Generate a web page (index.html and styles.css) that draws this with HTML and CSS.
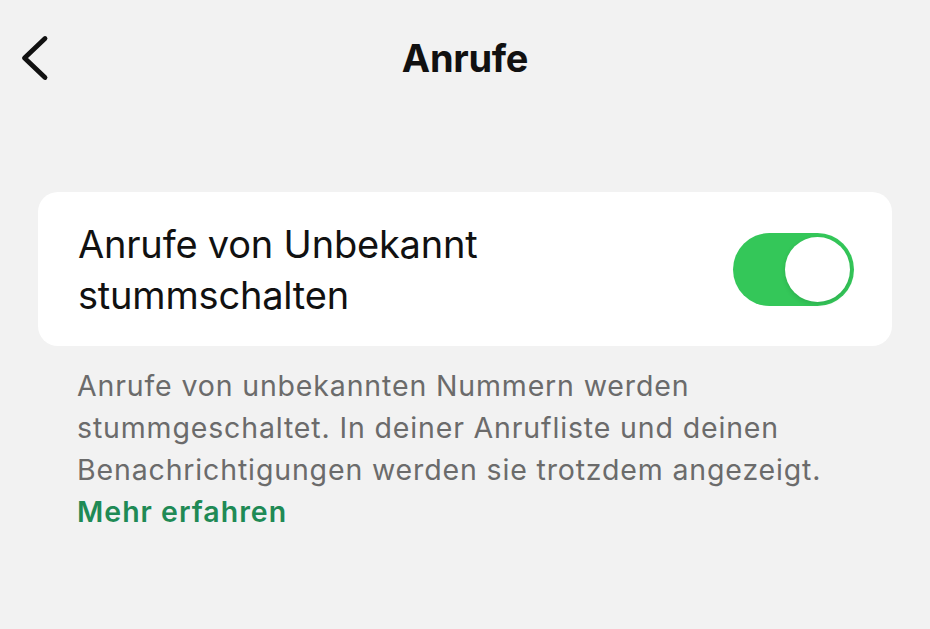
FILE: index.html
```html
<!DOCTYPE html>
<html lang="de">
<head>
  <meta charset="UTF-8">
  <meta name="viewport" content="width=device-width, initial-scale=1.0">
  <title>Anrufe</title>
  <link rel="stylesheet" href="styles.css">
</head>
<body>
  <div class="screen">
    <div class="nav-bar">
      <div class="back-btn">
        <svg width="30" height="46" viewBox="0 0 30 46">
          <path d="M26 3.5 L5.5 23 L26 42.5" fill="none" stroke="#111" stroke-width="4.8" stroke-linecap="round" stroke-linejoin="round"/>
        </svg>
      </div>
      <div class="nav-title">Anrufe</div>
      <div class="nav-spacer"></div>
    </div>

    <div class="settings-card">
      <div class="setting-label">Anrufe von Unbekannt<br>stummschalten</div>
      <div class="toggle on">
        <div class="knob"></div>
      </div>
    </div>

    <div class="setting-footer">
      Anrufe von unbekannten Nummern werden stummgeschaltet. In deiner Anrufliste und deinen Benachrichtigungen werden sie trotzdem angezeigt.
      <a class="learn-more" href="#">Mehr erfahren</a>
    </div>
  </div>
</body>
</html>
```

FILE: styles.css
```css
:root {
  --bg-color: #f2f2f2;
  --card-bg: #ffffff;
  --text-color: #111111;
  --muted-text: #6b6b6b;
  --accent: #1f8a55;
  --toggle-on: #34c759;
  --font-family: Inter, 'Liberation Sans', Arial, sans-serif;
}

* {
  margin: 0;
  padding: 0;
  box-sizing: border-box;
}

body {
  font-family: var(--font-family);
  background-color: var(--bg-color);
  color: var(--text-color);
  width: 930px;
  height: 629px;
  overflow: hidden;
}

.screen {
  padding: 0 38px;
}

.nav-bar {
  display: flex;
  align-items: center;
  height: 116px;
  margin: 0 -38px;
  padding: 0 19px;
}

.back-btn,
.nav-spacer {
  width: 60px;
  height: 46px;
  display: flex;
  align-items: center;
}

.nav-title {
  flex: 1;
  text-align: center;
  font-size: 38px;
  font-weight: 700;
  letter-spacing: -0.3px;
}

.settings-card {
  margin-top: 76px;
  background-color: var(--card-bg);
  border-radius: 20px;
  height: 154px;
  display: flex;
  align-items: center;
  justify-content: space-between;
  padding: 0 38px 0 40px;
}

.setting-label {
  font-size: 38px;
  line-height: 51px;
  letter-spacing: -0.2px;
  padding-top: 2px;
}

.toggle {
  width: 121px;
  height: 73px;
  border-radius: 37px;
  background-color: #e5e5ea;
  position: relative;
}

.toggle.on {
  background-color: var(--toggle-on);
}

.knob {
  position: absolute;
  top: 4px;
  right: 4px;
  width: 65px;
  height: 65px;
  border-radius: 50%;
  background-color: #ffffff;
  box-shadow: 0 2px 5px rgba(0, 0, 0, 0.12);
}

.setting-footer {
  padding: 19px 30px 0 39px;
  font-size: 28.5px;
  line-height: 42px;
  color: var(--muted-text);
  letter-spacing: 0.85px;
}

.learn-more {
  display: block;
  color: var(--accent);
  font-weight: 600;
  letter-spacing: 1px;
  text-decoration: none;
}
```
